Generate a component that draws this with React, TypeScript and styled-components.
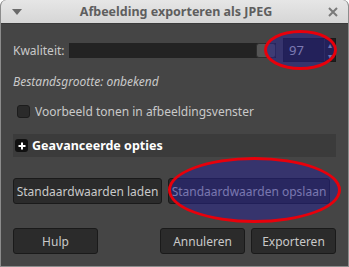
import styled, { createGlobalStyle } from "styled-components";

const GlobalStyle = createGlobalStyle`
  html, body {
    margin: 0;
    padding: 0;
    background: #ffffff;
  }
  * {
    box-sizing: border-box;
  }
`;

export default function App() {
  return (
    <>
      <GlobalStyle />
      <Window>
        <TitleBar>
          <MenuArrow viewBox="0 0 10 6" width={10} height={6}>
            <path d="M0 0 L10 0 L5 6 Z" fill="#6a6a6a" />
          </MenuArrow>
          <Title>Afbeelding exporteren als JPEG</Title>
          <CloseIcon viewBox="0 0 10 10" width={10} height={10}>
            <path d="M1 1 L9 9 M9 1 L1 9" stroke="#7a7a7a" strokeWidth={2} />
          </CloseIcon>
        </TitleBar>

        <Body>
          <QualityRow>
            <Label>Kwaliteit:</Label>
            <Slider>
              <Handle />
            </Slider>
            <Spin>
              <SpinValue>97</SpinValue>
              <SpinArrows>
                <span>▴</span>
                <span>▾</span>
              </SpinArrows>
            </Spin>
          </QualityRow>

          <FileSize>Bestandsgrootte: onbekend</FileSize>

          <CheckRow>
            <CheckBox />
            <span>Voorbeeld tonen in afbeeldingsvenster</span>
          </CheckRow>

          <Expander>
            <PlusBox>
              <svg viewBox="0 0 8 8" width={8} height={8}>
                <path d="M4 0.5 V7.5 M0.5 4 H7.5" stroke="#ffffff" strokeWidth={2} />
              </svg>
            </PlusBox>
            <ExpanderText>Geavanceerde opties</ExpanderText>
          </Expander>

          <DefaultsRow>
            <Button $w={149}>Standaardwaarden laden</Button>
            <Button $w={162}>Standaardwaarden opslaan</Button>
          </DefaultsRow>

          <ActionRow>
            <Button $w={85}>Hulp</Button>
            <Spacer />
            <Button $w={85}>Annuleren</Button>
            <Button $w={85}>Exporteren</Button>
          </ActionRow>
        </Body>

        <Marker $x={263} $y={30} $w={73} $h={40} />
        <Marker $x={167} $y={157} $w={173} $h={66} />
      </Window>
    </>
  );
}

const Window = styled.div`
  position: relative;
  width: 349px;
  height: 267px;
  background: #454545;
  border: 1px solid #8c8c8c;
  border-top: none;
  border-radius: 6px 6px 0 0;
  overflow: hidden;
  font-family: "Noto Sans", "Open Sans", sans-serif;
  font-size: 12px;
  color: #c9c9c9;
`;

const TitleBar = styled.div`
  height: 24px;
  display: flex;
  align-items: center;
  padding: 0 10px 0 11px;
  background: linear-gradient(#e6e6e6, #d6d6d6);
  border-bottom: 1px solid #3a3a3a;
`;

const MenuArrow = styled.svg`
  flex: none;
`;

const Title = styled.div`
  flex: 1;
  text-align: center;
  font-weight: bold;
  font-size: 12.5px;
  color: #5e5e5e;
  padding-left: 2px;
`;

const CloseIcon = styled.svg`
  flex: none;
`;

const Body = styled.div`
  display: flex;
  flex-direction: column;
  padding: 14px 12px 0 12px;
`;

const QualityRow = styled.div`
  display: flex;
  align-items: center;
  height: 24px;
`;

const Label = styled.div`
  width: 56px;
  flex: none;
`;

const Slider = styled.div`
  width: 207px;
  height: 15px;
  background: #232323;
  position: relative;
  display: flex;
  justify-content: flex-end;
`;

const Handle = styled.div`
  width: 20px;
  height: 15px;
  background: #555555;
  border: 1px solid #2e2e2e;
  border-radius: 3px;
`;

const Spin = styled.div`
  margin-left: 7px;
  width: 53px;
  height: 24px;
  display: flex;
  background: #1f1f1f;
  border: 1px solid #1a1a1a;
`;

const SpinValue = styled.div`
  flex: 1;
  padding-left: 5px;
  line-height: 22px;
  font-size: 13px;
  color: #d0d0d0;
`;

const SpinArrows = styled.div`
  width: 11px;
  display: flex;
  flex-direction: column;
  justify-content: space-between;
  align-items: center;
  font-size: 8px;
  line-height: 11px;
  color: #bbbbbb;
  border-left: 1px solid #333;
`;

const FileSize = styled.div`
  margin-top: 11px;
  font-style: italic;
  line-height: 17px;
`;

const CheckRow = styled.div`
  display: flex;
  align-items: center;
  margin-top: 13px;
  padding-left: 4px;
  gap: 5px;
  line-height: 17px;
`;

const CheckBox = styled.div`
  width: 13px;
  height: 13px;
  border-radius: 3px;
  background: #2a2a2a;
  border: 1px solid #1c1c1c;
`;

const Expander = styled.div`
  display: flex;
  align-items: center;
  margin-top: 14px;
  height: 23px;
  background: #3b3b3b;
  padding-left: 2px;
  gap: 4px;
`;

const PlusBox = styled.div`
  width: 13px;
  height: 13px;
  border-radius: 3px;
  background: #111111;
  display: flex;
  align-items: center;
  justify-content: center;
`;

const ExpanderText = styled.span`
  font-weight: bold;
  font-size: 12.5px;
  color: #ffffff;
`;

const DefaultsRow = styled.div`
  display: flex;
  gap: 6px;
  margin-top: 21px;
`;

const ActionRow = styled.div`
  display: flex;
  gap: 6px;
  margin-top: 24px;
`;

const Spacer = styled.div`
  flex: 1;
`;

const Button = styled.div<{ $w: number }>`
  width: ${(p) => p.$w}px;
  height: 26px;
  display: flex;
  align-items: center;
  justify-content: center;
  background: #2b2b2b;
  border: 1px solid #1a1a1a;
  border-radius: 3px;
  color: #c9c9c9;
  white-space: nowrap;
`;

const Marker = styled.div<{ $x: number; $y: number; $w: number; $h: number }>`
  position: absolute;
  left: ${(p) => p.$x}px;
  top: ${(p) => p.$y}px;
  width: ${(p) => p.$w}px;
  height: ${(p) => p.$h}px;
  border: 3px solid #e8000b;
  border-radius: 50%;
  background: rgba(40, 35, 150, 0.5);
`;
